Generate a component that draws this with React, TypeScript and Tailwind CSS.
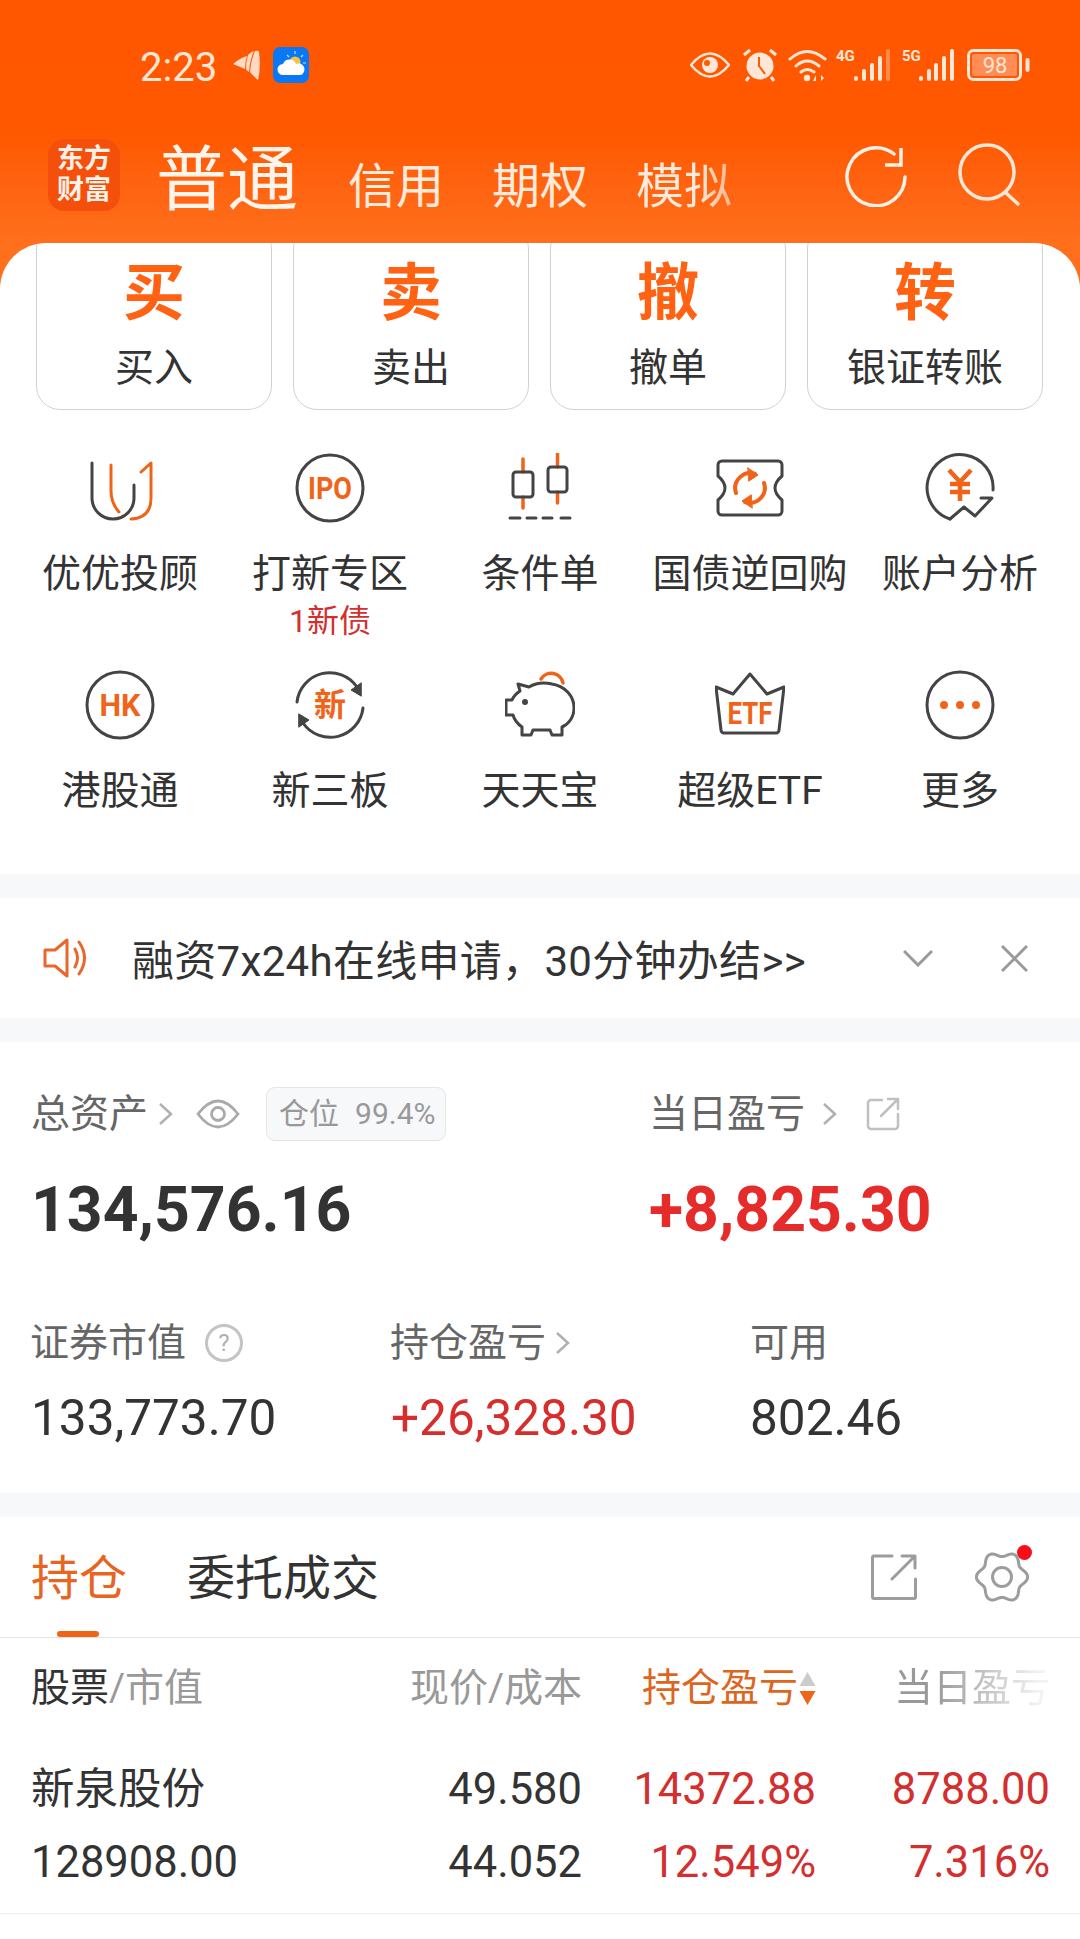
import React from "react";

const quickActions = [
  { big: "买", label: "买入" },
  { big: "卖", label: "卖出" },
  { big: "撤", label: "撤单" },
  { big: "转", label: "银证转账" },
];

const GRAY = "#444444";
const ORANGE = "#f0641a";

function IconBox({ children }: { children: React.ReactNode }) {
  return (
    <svg width="70" height="70" viewBox="0 0 70 70" fill="none" strokeLinecap="round" strokeLinejoin="round">
      {children}
    </svg>
  );
}

function BadgeText({ children, size, y = 35, length }: { children: React.ReactNode; size: number; y?: number; length?: number }) {
  return (
    <text
      x="35"
      y={y}
      textAnchor="middle"
      dominantBaseline="central"
      fontSize={size}
      fontWeight="700"
      fill={ORANGE}
      textLength={length}
      lengthAdjust={length ? "spacingAndGlyphs" : undefined}
    >
      {children}
    </text>
  );
}

const YouIcon = () => (
  <IconBox>
    <path d="M7 10V45a21 21 0 0 0 42 0V32" stroke={GRAY} strokeWidth="3" />
    <path d="M26 12V38Q26 50 34 59" stroke={ORANGE} strokeWidth="3" />
    <path d="M56 19L66 10V45Q66 65 46 66" stroke={ORANGE} strokeWidth="3" />
  </IconBox>
);

const IpoIcon = () => (
  <IconBox>
    <circle cx="35" cy="35" r="33" stroke={GRAY} strokeWidth="3" />
    <BadgeText size={32} length={44}>IPO</BadgeText>
  </IconBox>
);

const CandleIcon = () => (
  <IconBox>
    <path d="M18 6V19M18 44V55M52.5 1V14M52.5 39V50" stroke={ORANGE} strokeWidth="3.5" />
    <rect x="8" y="19" width="20" height="25" rx="3" stroke={GRAY} strokeWidth="3" />
    <rect x="43" y="14" width="19" height="25" rx="3" stroke={GRAY} strokeWidth="3" />
    <path d="M5 65H15M22 65H31M38 65H47M56 65H65" stroke={GRAY} strokeWidth="3" />
  </IconBox>
);

const TicketIcon = () => (
  <IconBox>
    <path
      d="M7 8H63a4 4 0 0 1 4 4V23Q60 29 60 35Q60 41 67 47V58a4 4 0 0 1-4 4H7a4 4 0 0 1-4-4V47Q10 41 10 35Q10 29 3 23V12a4 4 0 0 1 4-4Z"
      stroke={GRAY}
      strokeWidth="3"
    />
    <path d="M21 40A15 15 0 0 1 40 21M49 30A15 15 0 0 1 30 49" stroke={ORANGE} strokeWidth="4" />
    <path d="M33 15L43 22L34 28ZM37 55L27 48L36 42Z" fill={ORANGE} stroke={ORANGE} strokeWidth="1" />
  </IconBox>
);

const AccountIcon = () => (
  <IconBox>
    <path d="M25 66A33 33 0 1 1 68 37" stroke={GRAY} strokeWidth="3" />
    <path d="M56 45H67L50 63L39 54L25 66" stroke={GRAY} strokeWidth="3" />
    <path
      d="M24 17L35 29L46 17M35 29V48M25 31H45M25 39H45"
      stroke={ORANGE}
      strokeWidth="4.5"
      strokeLinecap="butt"
      strokeLinejoin="miter"
    />
  </IconBox>
);

const HkIcon = () => (
  <IconBox>
    <circle cx="35" cy="35" r="33" stroke={GRAY} strokeWidth="3" />
    <BadgeText size={32} length={41}>HK</BadgeText>
  </IconBox>
);

const XinIcon = () => (
  <IconBox>
    <path d="M2 32A33 33 0 0 1 62 17" stroke={GRAY} strokeWidth="3" />
    <path d="M68 38A33 33 0 0 1 8 53" stroke={GRAY} strokeWidth="3" />
    <path d="M66 26L56 20L66 13ZM4 44L14 50L4 57Z" fill={GRAY} stroke={GRAY} strokeWidth="1" />
    <BadgeText size={32}>新</BadgeText>
  </IconBox>
);

const PigIcon = () => (
  <IconBox>
    <path d="M36 9A12 12 0 0 1 58 13" stroke={ORANGE} strokeWidth="3.5" />
    <path
      d="M13 14L24 17Q34 11 47 14C60 16 69 26 69 38C69 47 64 54 57 57V65H47L45 60H28L26 65H17V57Q10 52 8 45H1V30H7Q9 25 15 21Z"
      stroke={GRAY}
      strokeWidth="3"
    />
    <circle cx="20" cy="32" r="3" fill={GRAY} />
  </IconBox>
);

const EtfIcon = () => (
  <IconBox>
    <path d="M1 17L18 24L35 4L52 24L69 17L64 60a3 3 0 0 1-3 3H9a3 3 0 0 1-3-3Z" stroke={GRAY} strokeWidth="3" />
    <BadgeText size={32} y={43} length={45}>ETF</BadgeText>
  </IconBox>
);

const MoreIcon = () => (
  <IconBox>
    <circle cx="35" cy="35" r="33" stroke={GRAY} strokeWidth="3" />
    <circle cx="19" cy="35" r="4" fill={ORANGE} />
    <circle cx="35" cy="35" r="4" fill={ORANGE} />
    <circle cx="51" cy="35" r="4" fill={ORANGE} />
  </IconBox>
);

const shortcuts = [
  { icon: <YouIcon />, label: "优优投顾" },
  { icon: <IpoIcon />, label: "打新专区", sub: "1新债" },
  { icon: <CandleIcon />, label: "条件单" },
  { icon: <TicketIcon />, label: "国债逆回购" },
  { icon: <AccountIcon />, label: "账户分析" },
  { icon: <HkIcon />, label: "港股通" },
  { icon: <XinIcon />, label: "新三板" },
  { icon: <PigIcon />, label: "天天宝" },
  { icon: <EtfIcon />, label: "超级ETF" },
  { icon: <MoreIcon />, label: "更多" },
];

// 6 lobed outline for the settings gear
function gearPath(cx: number, cy: number) {
  const points: string[] = [];
  for (let i = 0; i < 120; i++) {
    const a = (i / 120) * Math.PI * 2;
    const r = 23 + 2.6 * Math.cos(6 * a);
    points.push(`${(cx + r * Math.cos(a)).toFixed(2)} ${(cy + r * Math.sin(a)).toFixed(2)}`);
  }
  return `M${points.join("L")}Z`;
}

function SignalIcon({ tag, bars, last }: { tag: string; bars: number[]; last: string }) {
  const heights = [5, 12, 18, 25, 32];
  return (
    <div className="relative w-[54px] h-[34px]">
      <span className="absolute left-0 top-0 text-[15px] leading-[17px] font-bold text-[#ffe6d6]">{tag}</span>
      <svg width="54" height="34" viewBox="0 0 54 34" fill="#ffe6d6">
        {bars.map((x, i) => (
          <rect key={x} x={x} y={33 - heights[i]} width="4" height={heights[i]} rx="2" fill={i === 4 ? last : undefined} />
        ))}
      </svg>
    </div>
  );
}

function StatusIcons() {
  const c = "#ffe6d6";
  return (
    <div className="flex items-center">
      <svg width="40" height="26" viewBox="0 0 40 26" fill="none">
        <path d="M1 13Q20 -10 39 13Q20 36 1 13Z" stroke={c} strokeWidth="2.5" />
        <circle cx="20" cy="13" r="8" fill={c} />
        <circle cx="17" cy="11" r="3" fill="#ff5a00" />
      </svg>
      <svg className="ml-[12px]" width="36" height="34" viewBox="0 0 36 34" fill="none">
        <circle cx="18" cy="18" r="13.5" fill={c} />
        <path d="M17 9V18L23 26" stroke="#ff5a00" strokeWidth="2" />
        <path d="M2 7L8 2M34 7L28 2M7 29L4 33M29 29L32 33" stroke={c} strokeWidth="3" />
      </svg>
      <svg className="ml-[10px]" width="40" height="34" viewBox="0 0 40 34" fill="none">
        <path d="M2 11Q19 -4 37 11M8 18Q19 8 31 18M13 24Q19 19 26 24" stroke={c} strokeWidth="3" strokeLinecap="round" />
        <circle cx="19" cy="30" r="3.2" fill={c} />
        <path d="M28 33V27L25 33ZM33 27V33L36 30Z" fill={c} />
      </svg>
      <div className="ml-[8px]">
        <SignalIcon tag="4G" bars={[18, 26, 34, 42, 50]} last="#ff8a4d" />
      </div>
      <div className="ml-[12px]">
        <SignalIcon tag="5G" bars={[17, 25, 32, 40, 48]} last="#ffe6d6" />
      </div>
      <svg className="ml-[11px]" width="63" height="32" viewBox="0 0 63 32" fill="none">
        <rect x="1.5" y="1.5" width="52" height="29" rx="5" stroke={c} strokeWidth="3" />
        <rect x="5" y="5" width="45" height="22" rx="2" fill="#ff8d55" />
        <text x="28" y="16.5" textAnchor="middle" dominantBaseline="central" fontSize="22" fill={c}>98</text>
        <rect x="58.5" y="9" width="4" height="14" rx="2" fill={c} />
      </svg>
    </div>
  );
}

function ChevronRight({ className }: { className: string }) {
  return (
    <svg className={className} width="15" height="24" viewBox="0 0 15 24" fill="none">
      <path d="M2 2L13 12L2 22" stroke="#b0b0b0" strokeWidth="2.5" />
    </svg>
  );
}

function ShareSmall() {
  return (
    <svg width="34" height="34" viewBox="0 0 34 34" fill="none" strokeLinecap="round" strokeLinejoin="round">
      <path d="M16 3H5a3 3 0 0 0-3 3V29a3 3 0 0 0 3 3H29a3 3 0 0 0 3-3V17" stroke="#c0c0c0" strokeWidth="2.5" />
      <path d="M15 19L31 3M22 2H32V12" stroke="#c0c0c0" strokeWidth="2.5" />
    </svg>
  );
}

export default function App() {
  return (
    <div className="w-[1080px] h-[1939px] overflow-hidden bg-[#ff6f1c] font-['Roboto','Noto_Sans_CJK_SC',sans-serif] text-[#333333]">
      {/* orange header */}
      <header className="h-[243px] pt-[47px] bg-linear-to-b from-[#ff5700] via-[#ff5800] via-55% to-[#ff6f1c]">
        <div className="flex items-center justify-between h-[36px] pl-[140px] pr-[50px]">
          <div className="flex items-center">
            <span className="pt-[5px] text-[40px] leading-[36px] text-[#ffe6d6]">2:23</span>
            <svg className="ml-[16px]" width="28" height="30" viewBox="0 0 28 30" fill="#ffd9c2">
              <path d="M0 14Q7 8 14 6Q12 12 12 19Z" />
              <path d="M15 5Q18 2 21 1Q17 9 16 22Q14 21 13 19Q13 11 15 5Z" />
              <path d="M22 1Q26 0 26 2Q28 18 25 30Q20 26 17 22Q18 10 22 1Z" />
            </svg>
            <svg className="ml-[12px]" width="36" height="36" viewBox="0 0 36 36">
              <rect width="36" height="36" rx="7" fill="#0a78f5" />
              <circle cx="22" cy="15" r="5.5" fill="#f5c242" />
              <path d="M22 4V7M30 8L28 10M33 16H30M14 8L16 10" stroke="#bcdcff" strokeWidth="1.2" />
              <path d="M10 28a5.5 5.5 0 0 1 0-11a7 7 0 0 1 13 0a5.5 5.5 0 0 1 5 11Z" fill="#ffffff" />
            </svg>
          </div>
          <StatusIcons />
        </div>

        <div className="flex items-start pl-[48px] pr-[58px] mt-[56px]">
          <div className="flex flex-col items-center justify-center w-[72px] h-[72px] rounded-[16px] bg-[#f4500c] text-[#fff1e8] text-[27px] leading-[31px] font-bold">
            <span>东方</span>
            <span>财富</span>
          </div>
          <span className="ml-[36px] mt-[5px] text-[71px] leading-[72px] text-[#fff4ec]">普通</span>
          <div className="flex gap-[48px] ml-[50px] mt-[23px] text-[48px] leading-[50px] text-[#ffeadc]">
            <span>信用</span>
            <span>期权</span>
            <span className="bg-linear-to-r from-[#ffeadc] from-65% to-[#ffb48a] bg-clip-text text-transparent">模拟</span>
          </div>
          <div className="flex items-center gap-[50px] ml-auto mt-[4px]">
            <svg width="64" height="64" viewBox="0 0 64 64" fill="none">
              <path d="M61 34A29 29 0 1 1 50 11" stroke="#fff0e6" strokeWidth="3.5" strokeLinecap="round" />
              <path d="M57 5V22H41" stroke="#fff0e6" strokeWidth="3.5" />
            </svg>
            <svg width="64" height="64" viewBox="0 0 64 64" fill="none">
              <circle cx="29" cy="29" r="27" stroke="#ffe6d6" strokeWidth="3.5" />
              <path d="M47 49L61 62" stroke="#ffe6d6" strokeWidth="3.5" />
            </svg>
          </div>
        </div>
      </header>

      {/* white sheet */}
      <main className="h-[1696px] overflow-hidden rounded-t-[46px] bg-white">
        <div className="flex gap-[21px] -mt-[18px] pl-[36px]">
          {quickActions.map((a) => (
            <div
              key={a.big}
              className="flex flex-col items-center w-[236px] h-[185px] rounded-[24px] border border-[#d2d2d2] pt-[36px]"
            >
              <span className="text-[62px] leading-[64px] font-bold text-[#ff6212]">{a.big}</span>
              <span className="mt-[22px] text-[39px] leading-[40px] text-[#333333]">{a.label}</span>
            </div>
          ))}
        </div>

        <div className="grid grid-cols-5 mt-[43px] px-[15px] h-[421px] content-start">
          {shortcuts.map((s) => (
            <div key={s.label} className="flex flex-col items-center h-[217px]">
              <div className="h-[70px]">{s.icon}</div>
              <span className="mt-[29px] text-[39px] leading-[44px] whitespace-nowrap">{s.label}</span>
              {s.sub && <span className="mt-[7px] text-[32px] leading-[36px] text-[#d32f2f]">{s.sub}</span>}
            </div>
          ))}
        </div>

        <div className="h-[24px] bg-[#f7f8fa]" />

        {/* notice */}
        <div className="flex items-center h-[120px] pl-[43px]">
          <svg width="48" height="40" viewBox="0 0 48 40" fill="none">
            <path d="M2 12H12L24 2V38L12 28H2Z" stroke="#e8672a" strokeWidth="3" strokeLinejoin="round" />
            <path d="M32 11Q37 20 32 29M36 4Q47 20 36 36" stroke="#e8672a" strokeWidth="3" strokeLinecap="round" />
          </svg>
          <span className="ml-[41px] pt-[8px] text-[42px] leading-[48px] tracking-[0.3px] whitespace-nowrap">融资7x24h在线申请，30分钟办结&gt;&gt;</span>
          <svg className="ml-auto" width="30" height="18" viewBox="0 0 30 18" fill="none">
            <path d="M1 2L15 16L29 2" stroke="#9a9a9a" strokeWidth="3" />
          </svg>
          <svg className="ml-[68px] mr-[52px]" width="27" height="27" viewBox="0 0 27 27" fill="none">
            <path d="M1 1L26 26M26 1L1 26" stroke="#9a9a9a" strokeWidth="3" />
          </svg>
        </div>

        <div className="h-[24px] bg-[#f7f8fa]" />

        {/* assets */}
        <section className="h-[451px] pt-[45px] px-[31px]">
          <div className="flex items-center h-[54px]">
            <div className="flex items-center w-[618px]">
              <span className="text-[39px] leading-[44px] text-[#666666]">总资产</span>
              <ChevronRight className="ml-[10px]" />
              <svg className="ml-[23px]" width="44" height="30" viewBox="0 0 44 30" fill="none">
                <path d="M2 15Q22 -11 42 15Q22 41 2 15Z" stroke="#aaaaaa" strokeWidth="2.8" />
                <circle cx="22" cy="15" r="6.5" stroke="#aaaaaa" strokeWidth="2.8" />
              </svg>
              <div className="flex items-center ml-[26px] w-[180px] h-[54px] pl-[12px] rounded-[9px] border border-[#e6e6e6] bg-[#f7f8fa] text-[#999999] text-[30px] leading-[34px]">
                <span>仓位</span>
                <span className="ml-[16px]">99.4%</span>
              </div>
            </div>
            <span className="text-[39px] leading-[44px] text-[#666666]">当日盈亏</span>
            <ChevronRight className="ml-[17px]" />
            <div className="ml-[29px]">
              <ShareSmall />
            </div>
          </div>

          <div className="flex mt-[34px] text-[62.5px] leading-[70px] font-bold">
            <span className="w-[618px] text-[#333333]">134,576.16</span>
            <span className="text-[#e62b2b]">+8,825.30</span>
          </div>

          <div className="grid grid-cols-[360px_360px_1fr] -ml-[1px] mt-[76px] text-[39px] leading-[44px] text-[#666666]">
            <div className="flex items-center">
              <span>证券市值</span>
              <span className="flex items-center justify-center ml-[19px] w-[38px] h-[38px] rounded-full border-[3px] border-[#c4c4c4] text-[24px] leading-[30px] text-[#b0b0b0]">?</span>
            </div>
            <div className="flex items-center">
              <span>持仓盈亏</span>
              <ChevronRight className="ml-[9px]" />
            </div>
            <span>可用</span>
          </div>
          <div className="grid grid-cols-[360px_359px_1fr] mt-[23px] text-[49.5px] leading-[60px]">
            <span>133,773.70</span>
            <span className="text-[#d62d2d]">+26,328.30</span>
            <span>802.46</span>
          </div>
        </section>

        <div className="h-[24px] bg-[#f7f8fa]" />

        {/* positions */}
        <div className="relative flex items-center h-[121px] border-b border-[#e4e4e4] pl-[31px]">
          <span className="pt-[4px] text-[48px] leading-[52px] text-[#e8651f]">持仓</span>
          <span className="ml-[60px] pt-[4px] text-[48px] leading-[52px]">委托成交</span>
          <svg className="ml-auto" width="46" height="46" viewBox="0 0 46 46" fill="none" strokeLinejoin="round" strokeLinecap="round">
            <path d="M21 2H3a1.5 1.5 0 0 0-1.5 1.5V43a1.5 1.5 0 0 0 1.5 1.5H43a1.5 1.5 0 0 0 1.5-1.5V25" stroke="#9c9c9c" strokeWidth="3" />
            <path d="M21 25L44 2M31 2H44V14" stroke="#9c9c9c" strokeWidth="3" />
          </svg>
          <div className="relative ml-[58px] mr-[51px] w-[54px] h-[54px]">
            <svg width="54" height="54" viewBox="0 0 54 54" fill="none">
              <path d={gearPath(27, 27)} stroke="#9c9c9c" strokeWidth="3" strokeLinejoin="round" />
              <circle cx="27" cy="27" r="9.5" stroke="#9c9c9c" strokeWidth="3" />
            </svg>
            <span className="absolute -top-[5px] -right-[3px] w-[15px] h-[15px] rounded-full bg-[#f50f1a]" />
          </div>
          <span className="absolute left-[57px] bottom-0 w-[42px] h-[6px] rounded-full bg-[#f0641a]" />
        </div>

        <div className="grid grid-cols-[371px_180px_234px_234px] items-center h-[100px] pl-[31px] text-[39px] leading-[44px] text-[#999999]">
          <span>
            <span className="text-[#333333]">股票</span>/市值
          </span>
          <span className="text-right whitespace-nowrap">现价/成本</span>
          <span className="flex items-center justify-end whitespace-nowrap text-[#dc661e]">
            持仓盈亏
            <svg className="ml-[1px]" width="17" height="34" viewBox="0 0 17 34">
              <path d="M8.5 1L16.5 15H0.5Z" fill="#cccccc" />
              <path d="M0.5 20H16.5L8.5 34Z" fill="#f0641a" />
            </svg>
          </span>
          <span className="text-right whitespace-nowrap bg-linear-to-r from-[#999999] from-50% to-[#f2f2f2] to-95% bg-clip-text text-transparent">当日盈亏</span>
        </div>

        <div className="grid grid-cols-[371px_180px_234px_234px] grid-rows-[50px_50px] gap-y-[23px] items-center h-[176px] pt-[27px] pl-[31px] border-b border-[#ececec] text-[43.5px] leading-[50px]">
          <span>新泉股份</span>
          <span className="text-right">49.580</span>
          <span className="text-right text-[#d32f2f]">14372.88</span>
          <span className="text-right text-[#d32f2f]">8788.00</span>
          <span>128908.00</span>
          <span className="text-right">44.052</span>
          <span className="text-right text-[#d32f2f]">12.549%</span>
          <span className="text-right text-[#d32f2f]">7.316%</span>
        </div>
      </main>
    </div>
  );
}
